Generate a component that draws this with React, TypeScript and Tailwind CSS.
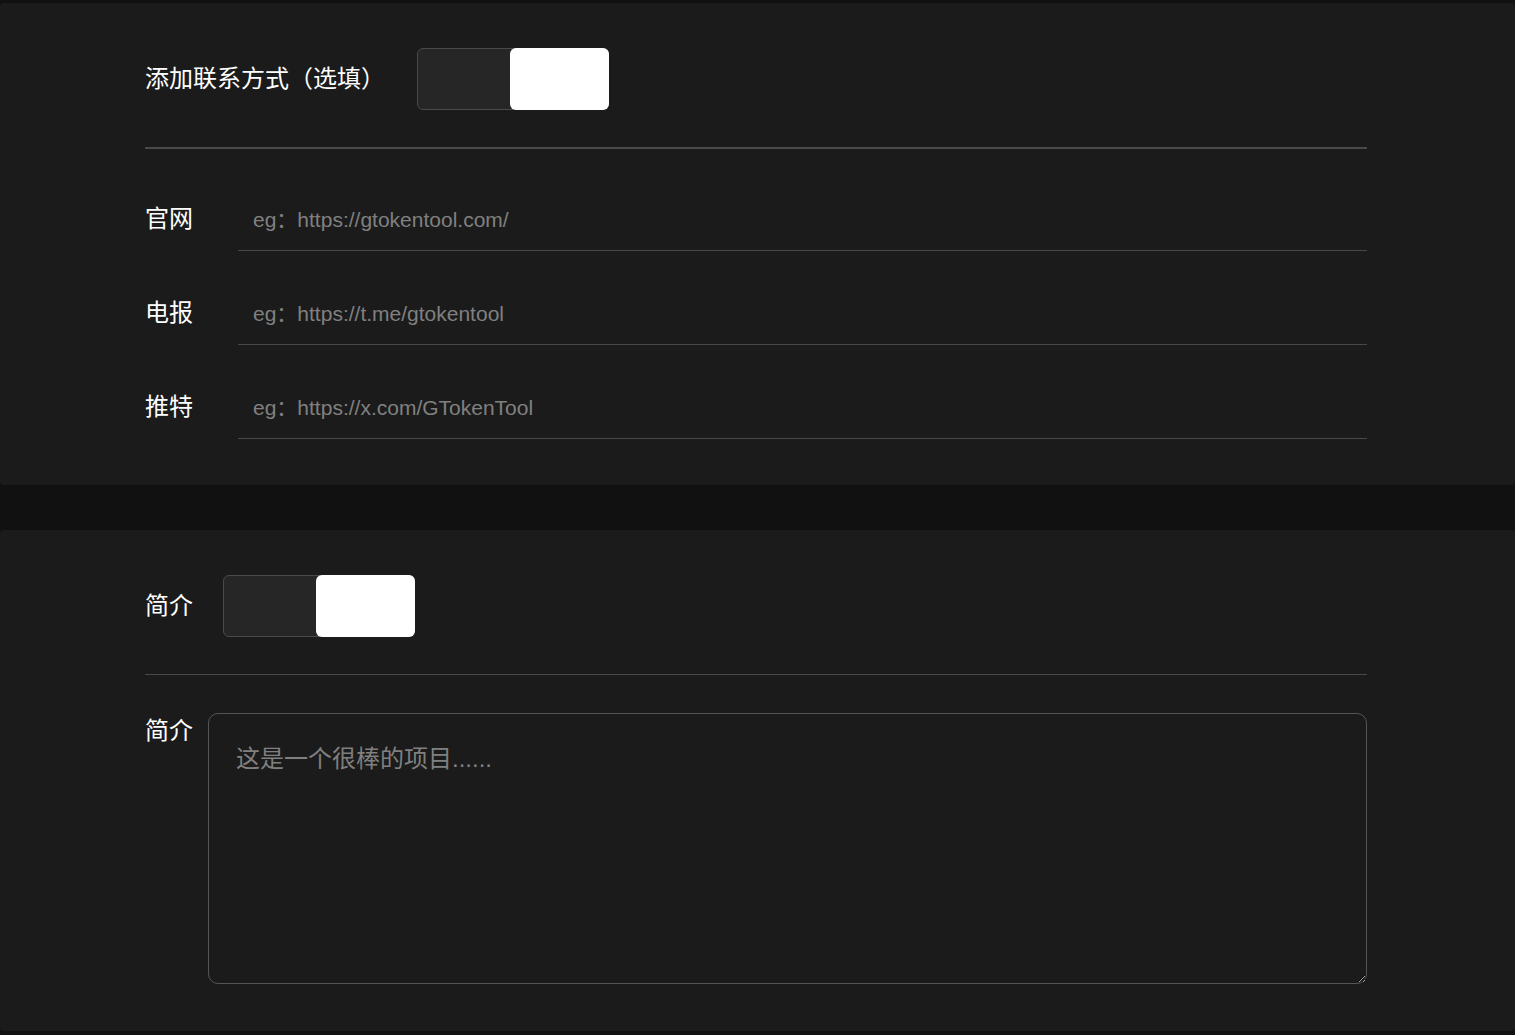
import { useState } from "react";

const cjk = "font-['Liberation_Sans','Noto_Sans_CJK_SC',sans-serif]";

function Toggle({ on, onChange }: { on: boolean; onChange: () => void }) {
  return (
    <button
      type="button"
      onClick={onChange}
      className="relative flex h-[62px] w-[192px] shrink-0 rounded-md border border-[#4a4a4a] bg-[#262626]"
    >
      <span
        className={
          on
            ? "absolute -top-px -right-px -bottom-px w-[99px] rounded-md bg-white"
            : "absolute -top-px -left-px -bottom-px w-[99px] rounded-md bg-white"
        }
      />
    </button>
  );
}

const links = [
  { label: "官网", placeholder: "eg：https://gtokentool.com/" },
  { label: "电报", placeholder: "eg：https://t.me/gtokentool" },
  { label: "推特", placeholder: "eg：https://x.com/GTokenTool" },
];

export default function App() {
  const [contact, setContact] = useState(true);
  const [intro, setIntro] = useState(true);

  return (
    <div className={`min-h-[1035px] bg-[#111111] pt-[3px] pb-[5px] text-white ${cjk}`}>
      {/* contact card */}
      <section className="rounded-[4px] bg-[#1b1b1b] pl-[145px] pr-[148px] pt-[45px] pb-[46px]">
        <div className="flex items-center">
          <span className="text-[24px] leading-none">添加联系方式（选填）</span>
          <div className="ml-[32px]">
            <Toggle on={contact} onChange={() => setContact(!contact)} />
          </div>
        </div>
        <div className="mt-[37px] h-[2px] bg-[#4a4a4a]" />
        <div className="mt-[40px] flex flex-col gap-[32px]">
          {links.map((l) => (
            <div key={l.label} className="flex items-center">
              <span className="-mt-[3px] w-[93px] shrink-0 text-[24px] leading-none">{l.label}</span>
              <input
                placeholder={l.placeholder}
                className="h-[62px] flex-1 border-b border-[#484848] bg-transparent px-[15px] text-[21px] text-white outline-none placeholder:text-[#808080]"
              />
            </div>
          ))}
        </div>
      </section>

      <div className="h-[45px]" />

      {/* intro card */}
      <section className="rounded-[4px] bg-[#1b1b1b] pl-[145px] pr-[148px] pt-[45px] pb-[47px]">
        <div className="flex items-center">
          <span className="text-[24px] leading-none">简介</span>
          <div className="ml-[30px]">
            <Toggle on={intro} onChange={() => setIntro(!intro)} />
          </div>
        </div>
        <div className="mt-[37px] h-px bg-[#4a4a4a]" />
        <div className="mt-[38px] flex items-start">
          <span className="mt-[6px] w-[63px] shrink-0 text-[24px] leading-none">简介</span>
          <textarea
            placeholder="这是一个很棒的项目......"
            className="h-[271px] flex-1 rounded-[10px] border border-[#555555] bg-transparent px-[27px] pt-[30px] text-[24px] leading-[1.25] text-white outline-none [color-scheme:dark] placeholder:text-[#808080]"
          />
        </div>
      </section>
    </div>
  );
}
